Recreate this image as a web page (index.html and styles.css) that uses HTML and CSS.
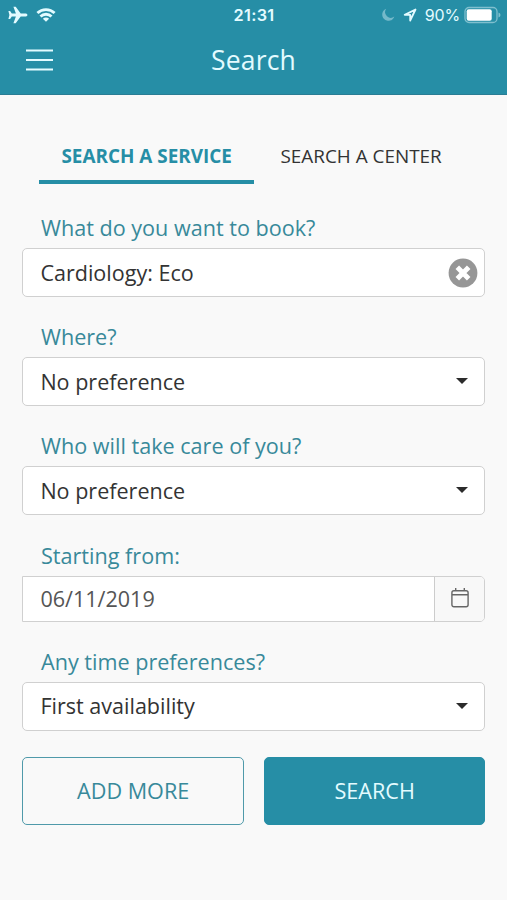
FILE: index.html
```html
<!DOCTYPE html>
<html lang="en">
<head>
<meta charset="utf-8">
<title>Search</title>
<link rel="stylesheet" href="styles.css">
</head>
<body>
<header class="header">
  <div class="status">
    <div class="status-left">
      <svg width="20" height="18" viewBox="0 0 20 18"><path fill="currentColor" d="M19.500 9c0-.9-1-1.500-2.200-1.500h-4.600L7.700.8H5.400l2.500 6.700H3.800L2.100 5H.4l1 4-1 4h1.700l1.700-2.500h4.100L5.400 17.200h2.300l5-6.700h4.600c1.200 0 2.200-.6 2.200-1.500z"/></svg>
      <svg width="20" height="14" viewBox="0 0 20 14"><g fill="none" stroke="currentColor" stroke-width="2.800"><path d="M1.400 5.100a12.300 12.300 0 0 1 17.200 0"/><path d="M4.500 8.500a7.800 7.800 0 0 1 11 0"/></g><path fill="currentColor" d="M6.900 10.700a4.400 4.400 0 0 1 6.200 0L10 13.800z"/></svg>
    </div>
    <span class="clock">21:31</span>
    <div class="status-right">
      <svg class="moon" width="13" height="13" viewBox="0 0 13 13"><path fill="currentColor" d="M4.200.8A6.200 6.200 0 1 0 12.300 8.600 5.700 5.700 0 0 1 4.200.8z"/></svg>
      <svg class="arrow" width="14" height="14" viewBox="0 0 14 14"><path fill="none" stroke="currentColor" stroke-width="1.800" stroke-linejoin="round" d="M12.500 1.500 1.700 6.900h5.500v5.600z"/></svg>
      <span class="percent">90%</span>
      <svg width="37" height="18" viewBox="0 0 37 18"><rect x="1" y="1.500" width="32" height="15" rx="4" fill="none" stroke="#7fbfce" stroke-width="1.300"/><rect x="2.700" y="3.200" width="25" height="11.600" rx="2" fill="#fff"/><path fill="#7fbfce" d="M34.500 6.500q2 .8 2 2.500t-2 2.500z"/></svg>
    </div>
  </div>
  <div class="bar">
    <svg class="menu" width="27" height="22" viewBox="0 0 27 22"><path stroke="currentColor" stroke-width="2.200" d="M0 1.500h27M0 11h27M0 20.500h27"/></svg>
    <h1 class="title">Search</h1>
  </div>
</header>
<main class="main">
  <nav class="tabs">
    <a class="tab tab-active">SEARCH A SERVICE</a>
    <a class="tab">SEARCH A CENTER</a>
  </nav>
  <label class="label">What do you want to book?</label>
  <div class="box">
    <span class="value">Cardiology: Eco</span>
    <svg width="30" height="30" viewBox="0 0 30 30"><circle cx="15" cy="15" r="14.400" fill="#969696"/><path stroke="#fff" stroke-width="5" d="m9.300 9.300 11.400 11.400M20.700 9.300 9.300 20.700"/></svg>
  </div>
  <label class="label">Where?</label>
  <div class="box"><span class="value">No preference</span><i class="caret"></i></div>
  <label class="label">Who will take care of you?</label>
  <div class="box"><span class="value">No preference</span><i class="caret"></i></div>
  <label class="label">Starting from:</label>
  <div class="box date">
    <span>06/11/2019</span>
    <div class="addon">
      <svg width="18" height="20" viewBox="0 0 18 20"><g fill="none" stroke="#666" stroke-width="1.400"><rect x=".9" y="2.800" width="16.200" height="16" rx="2"/><path d="M1 6.700h16M4.700 0v3M13.300 0v3"/></g></svg>
    </div>
  </div>
  <label class="label">Any time preferences?</label>
  <div class="box"><span class="value">First availability</span><i class="caret"></i></div>
  <div class="actions">
    <button class="btn">ADD MORE</button>
    <button class="btn btn-primary">SEARCH</button>
  </div>
</main>
</body>
</html>
```
FILE: styles.css
```css
* { box-sizing: border-box; }
body {
  margin: 0;
  height: 900px;
  background: #f9f9f9;
  font-family: "Open Sans", sans-serif;
  color: #333;
}
svg { display: block; }
.header {
  height: 95px;
  background: #268ea6;
  border-bottom: 1px solid #2a7d94;
  color: #e3fbff;
}
.status {
  display: grid;
  grid-template-columns: 1fr auto 1fr;
  align-items: center;
  height: 29px;
  padding: 0 7px 0 8px;
  font-family: Inter, sans-serif;
}
.status-left { display: flex; align-items: center; gap: 8px; }
.clock { font-size: 16.3px; font-weight: 600; letter-spacing: 0.3px; }
.status-right { display: flex; align-items: center; justify-content: flex-end; }
.moon { color: #75b9ca; margin-right: 8px; }
.arrow { margin-right: 8px; }
.percent { font-size: 16px; letter-spacing: -0.2px; margin-right: 4px; }
.status-right svg:last-child { margin-right: -1px; }
.bar {
  display: grid;
  grid-template-columns: 54px 1fr 54px;
  align-items: center;
  height: 61px;
}
.menu { margin-left: 26px; }
.title { margin: 0; text-align: center; font-size: 26.5px; line-height: 36px; font-weight: 400; letter-spacing: 0.2px; }
.main { padding: 37px 21.6px 0 22.4px; }
.tabs { display: flex; padding-left: 17px; margin-bottom: 29px; font-size: 18.9px; }
.tab {
  width: 214.5px;
  height: 52px;
  line-height: 49px;
  text-align: center;
  white-space: nowrap;
}
.tab-active { color: #268ea6; font-weight: 700; border-bottom: 4px solid #268ea6; }
.label {
  display: block;
  height: 35px;
  line-height: 30px;
  padding-left: 18.6px;
  color: #38899a;
  font-size: 21.6px;
}
.box {
  display: flex;
  align-items: center;
  justify-content: space-between;
  height: 49px;
  margin-bottom: 25.2px;
  padding: 0 6px 0 17px;
  background: #fff;
  border: 1.5px solid #d0d0d0;
  border-radius: 5px;
  font-size: 21.55px;
}
.value { padding-bottom: 1px; }
.caret {
  margin: 0 10px 1px 0;
  border: 6px solid transparent;
  border-top-color: #2b2b2b;
  border-bottom: 0;
}
.date { height: 46px; padding-right: 0; border-radius: 0 5px 5px 0; color: #555; }
.addon {
  display: flex;
  align-items: center;
  justify-content: center;
  align-self: stretch;
  width: 50px;
  padding-bottom: 2px;
  background: #f8f8f8;
  border-left: 1px solid #ccc;
  border-radius: 0 4px 4px 0;
}
.actions { display: flex; gap: 20px; padding-top: 1px; }
.btn {
  flex: 1;
  height: 68px;
  padding: 0;
  border: 1.5px solid #4f9aaa;
  border-radius: 5px;
  background: #f9f9f9;
  color: #38899a;
  font: 400 21.6px "Open Sans", sans-serif;
}
.btn-primary { background: #268ea6; border-color: #268ea6; color: #e3fbff; }
```
